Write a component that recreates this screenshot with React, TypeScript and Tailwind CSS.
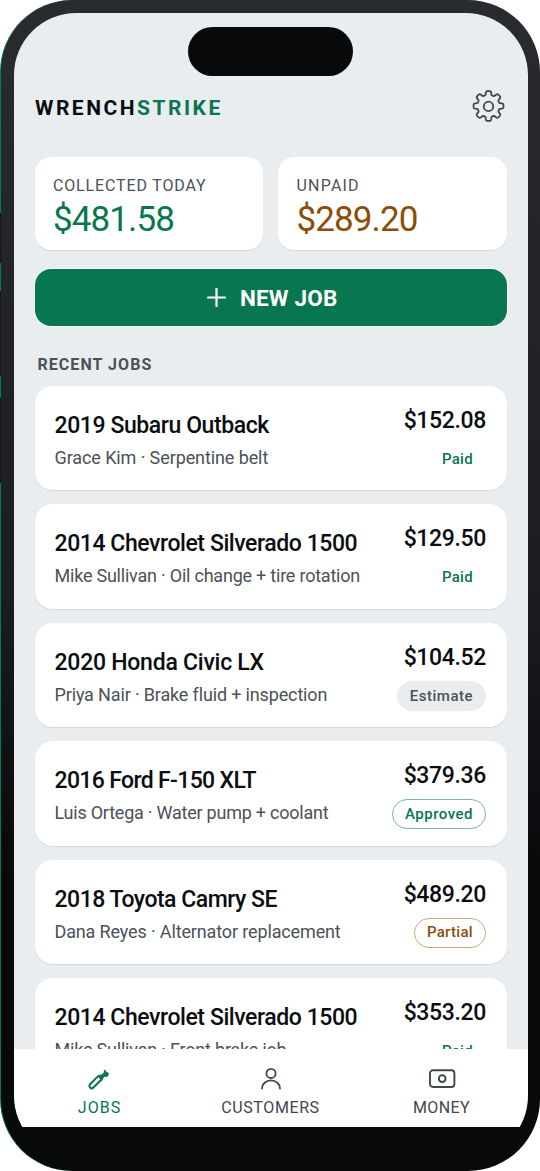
import clsx from "clsx";

interface Job {
  id: number;
  title: string;
  titleClass: string;
  detail: string;
  detailClass: string;
  amount: string;
  status: string;
}

const jobs: Job[] = [
  {
    id: 1,
    title: "2019 Subaru Outback",
    titleClass: "tracking-[-0.42px]",
    detail: "Grace Kim · Serpentine belt",
    detailClass: "tracking-[-0.1px]",
    amount: "$152.08",
    status: "Paid",
  },
  {
    id: 2,
    title: "2014 Chevrolet Silverado 1500",
    titleClass: "tracking-[-0.43px]",
    detail: "Mike Sullivan · Oil change + tire rotation",
    detailClass: "tracking-[-0.22px]",
    amount: "$129.50",
    status: "Paid",
  },
  {
    id: 3,
    title: "2020 Honda Civic LX",
    titleClass: "tracking-[-0.25px]",
    detail: "Priya Nair · Brake fluid + inspection",
    detailClass: "tracking-[-0.15px]",
    amount: "$104.52",
    status: "Estimate",
  },
  {
    id: 4,
    title: "2016 Ford F-150 XLT",
    titleClass: "tracking-[-0.65px]",
    detail: "Luis Ortega · Water pump + coolant",
    detailClass: "tracking-[-0.23px]",
    amount: "$379.36",
    status: "Approved",
  },
  {
    id: 5,
    title: "2018 Toyota Camry SE",
    titleClass: "tracking-[-0.5px]",
    detail: "Dana Reyes · Alternator replacement",
    detailClass: "tracking-[-0.14px]",
    amount: "$489.20",
    status: "Partial",
  },
  {
    id: 6,
    title: "2014 Chevrolet Silverado 1500",
    titleClass: "tracking-[-0.43px]",
    detail: "Mike Sullivan · Front brake job",
    detailClass: "tracking-[-0.2px]",
    amount: "$353.20",
    status: "Paid",
  },
];

const statusStyles: Record<string, string> = {
  Paid: "border-transparent text-[#08764e] tracking-[0.3px]",
  Estimate: "border-[#e9edf0] bg-[#e9edf0] text-[#4b5158] tracking-[0.5px]",
  Approved: "border-[#7fb5a0] text-[#08764e] tracking-[0.5px]",
  Partial: "border-[#cba880] text-[#8c4d08] tracking-[0.3px]",
};

// eight rounded teeth around the centre of a 34px box
const gearPath =
  "M" +
  Array.from({ length: 240 }, (_, i) => {
    const a = (i / 240) * Math.PI * 2;
    const r = 13 + 2 * Math.tanh(2.4 * Math.cos(8 * a) + 0.3);
    return `${(16.5 + r * Math.cos(a)).toFixed(2)} ${(17 + r * Math.sin(a)).toFixed(2)}`;
  }).join("L") +
  "Z";

const GearIcon = () => (
  <svg width="34" height="34" viewBox="0 0 34 34" fill="none" stroke="#40464d" strokeWidth="1.8" strokeLinejoin="round">
    <path d={gearPath} />
    <circle cx="16.5" cy="17.4" r="4.7" />
  </svg>
);

const WrenchIcon = () => (
  <svg width="24" height="24" viewBox="0 0 24 24" fill="none" stroke="#08764e" strokeWidth="2" strokeLinejoin="round">
    <path d="M10.4 8.9 2.1 17.2a2.3 2.3 0 0 0 3.3 3.3l8.3-8.3Z" />
    <path
      fill="#08764e"
      strokeWidth="1"
      d="m10.7 8.5 2.9-.6 2.6-2.2.3-2.8 1.5 2.2 2.4 1.1-.7 2.9-3.4.4-2 2.4-.6 1.8Z"
    />
  </svg>
);

const UserIcon = () => (
  <svg width="24" height="24" viewBox="0 0 24 24" fill="none" stroke="#40464d" strokeWidth="1.8" strokeLinecap="round">
    <circle cx="12" cy="6.4" r="4.6" />
    <path d="M3 21.4a9 8 0 0 1 18 0" />
  </svg>
);

const MoneyIcon = () => (
  <svg width="28" height="24" viewBox="0 0 28 24" fill="none" stroke="#40464d" strokeWidth="1.9">
    <rect x="2" y="3.2" width="24.4" height="16.8" rx="3" />
    <circle cx="14.2" cy="11.6" r="3.4" />
  </svg>
);

const JobCard = ({ job }: { job: Job }) => (
  <div className="flex h-[104.4px] shrink-0 justify-between rounded-[18px] bg-white pl-[19.5px] pr-[20.5px] shadow-[0_1px_1px_#d4d9dd]">
    <div className="pt-[24px]">
      <div className={clsx("whitespace-nowrap text-[23px] font-medium leading-8", job.titleClass)}>{job.title}</div>
      <div className={clsx("whitespace-nowrap text-[18px] leading-[31px] text-[#4b5158]", job.detailClass)}>
        {job.detail}
      </div>
    </div>
    <div className="flex flex-col items-end pt-[19px]">
      <div className="text-[23px] font-medium leading-8 tracking-[-0.35px]">{job.amount}</div>
      <div
        className={clsx(
          "mt-[7px] flex h-[30px] items-center rounded-full border px-3 text-[15px] font-medium",
          statusStyles[job.status]
        )}
      >
        {job.status}
      </div>
    </div>
  </div>
);

function App() {
  return (
    <div className="relative h-[1171px] w-[540px] overflow-hidden bg-white font-[Roboto,sans-serif] text-[#0b0d10]">
      <div className="h-full rounded-[72px] border-l border-[#08764e] bg-linear-to-b from-[#292b2f] via-[#1b1d20] to-[#08090b] to-75% pl-[13px] pr-[12.5px] pt-[13px]">
        <div className="flex h-[1145px] flex-col overflow-hidden rounded-[62px] bg-[#08090b]">
          <div className="flex h-[1036px] shrink-0 flex-col bg-[#e9edf0]">
            <div className="mx-auto mt-[14px] h-[49px] w-[165px] shrink-0 rounded-full bg-[#08090b]" />
            <div className="flex h-[81px] shrink-0 items-start justify-between pl-[21px] pr-[22px] pt-[13px]">
              <div className="pt-[3px] text-[21px] font-bold leading-8 tracking-[2.5px]">
                WRENCH<span className="text-[#08764e]">STRIKE</span>
              </div>
              <GearIcon />
            </div>

            <div className="flex h-[93px] shrink-0 gap-[15px] px-[21px]">
              <div className="flex-1 rounded-[16px] bg-white pl-[18px] pt-[19px] shadow-[0_1px_1px_#d4d9dd]">
                <div className="text-[16px] leading-5 tracking-[0.85px] text-[#4b5158]">COLLECTED TODAY</div>
                <div className="text-[35px] leading-[48px] tracking-[-0.9px] text-[#08764e]">$481.58</div>
              </div>
              <div className="flex-1 rounded-[16px] bg-white pl-[18.5px] pt-[19px] shadow-[0_1px_1px_#d4d9dd]">
                <div className="text-[16px] leading-5 tracking-[1.2px] text-[#4b5158]">UNPAID</div>
                <div className="text-[35px] leading-[48px] tracking-[-0.9px] text-[#8c4d08]">$289.20</div>
              </div>
            </div>

            <button className="mx-[21px] mt-[19px] flex h-[57px] shrink-0 items-center justify-center gap-[14px] rounded-[16px] bg-[#08764e] pl-[3px] text-[22.5px] font-bold tracking-[0.2px] text-white shadow-[0_0_0_1px_#f7f9fa]">
              <svg width="19" height="19" viewBox="0 0 18 18" stroke="currentColor" strokeWidth="2.1" strokeLinecap="round">
                <path d="M9 1v16M1 9h16" />
              </svg>
              <span className="pt-[3px]">NEW JOB</span>
            </button>

            <div className="mt-[29px] shrink-0 pl-[23.5px] text-[16px] font-bold leading-5 tracking-[1.05px] text-[#4b5158]">
              RECENT JOBS
            </div>

            <div className="mt-[11px] flex min-h-0 flex-1 flex-col gap-[14px] overflow-hidden px-[21px]">
              {jobs.map((job) => (
                <JobCard key={job.id} job={job} />
              ))}
            </div>
          </div>

          <div className="flex h-[78px] shrink-0 bg-white text-[16px] text-[#40464d]">
            <div className="flex w-[171px] flex-col items-center pt-[18px] text-[#08764e]">
              <WrenchIcon />
              <span className="mt-[7px] leading-5 tracking-[1px]">JOBS</span>
            </div>
            <div className="flex w-[171px] flex-col items-center pt-[18px]">
              <UserIcon />
              <span className="mt-[7px] leading-5 tracking-[0.6px]">CUSTOMERS</span>
            </div>
            <div className="flex w-[171px] flex-col items-center pt-[18px]">
              <MoneyIcon />
              <span className="mt-[7px] leading-5 tracking-[0.4px]">MONEY</span>
            </div>
          </div>
        </div>
      </div>
      {/* side buttons */}
      <div className="absolute left-0 top-[213px] h-[50px] w-px bg-[#17181b]" />
      <div className="absolute left-0 top-[291px] h-[85px] w-px bg-[#17181b]" />
      <div className="absolute left-0 top-[398px] h-[85px] w-px bg-[#17181b]" />
    </div>
  );
}

export default App;
